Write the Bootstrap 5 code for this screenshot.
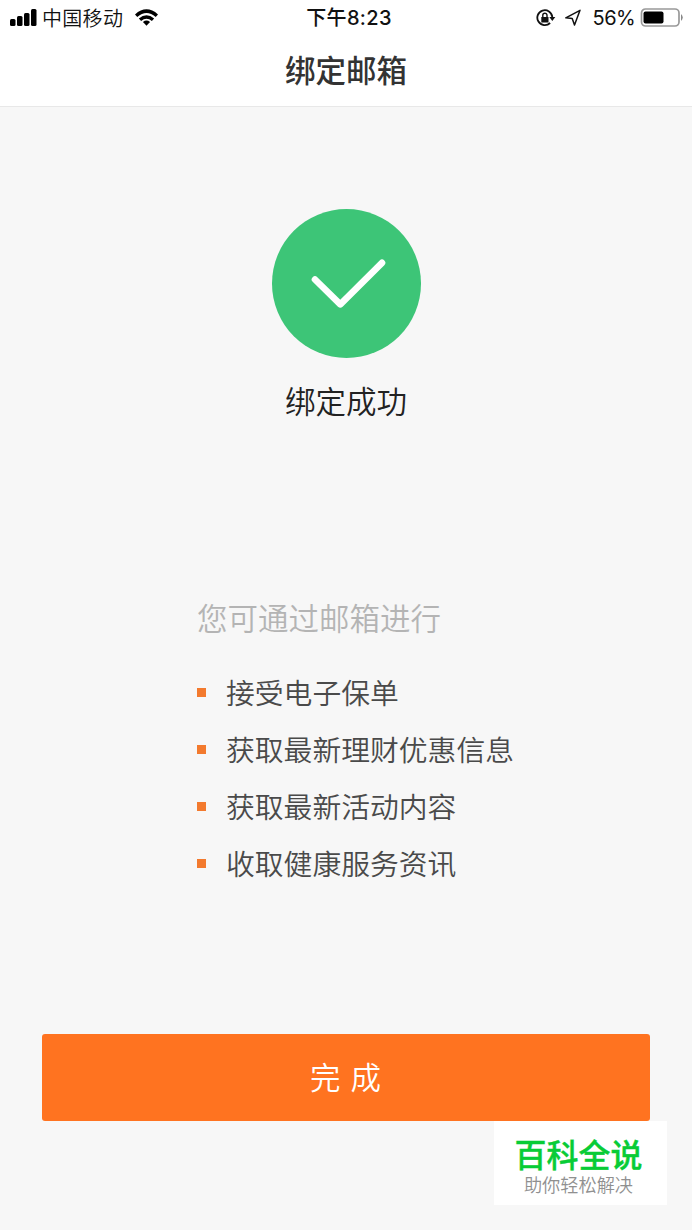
<!DOCTYPE html>
<html lang="zh-CN">
<head>
<meta charset="utf-8">
<meta name="viewport" content="width=device-width, initial-scale=1">
<title>绑定邮箱</title>
<link href="https://cdn.jsdelivr.net/npm/bootstrap@5.3.0/dist/css/bootstrap.min.css" rel="stylesheet">
<style>
  body { font-family: "Noto Sans CJK SC", sans-serif; background: #f7f7f7; height: 1230px; overflow: hidden; }
  .top-area { height: 107px; background: #fff; border-bottom: 1px solid #e8e8e8; }
  .status-bar { height: 35px; padding: 0 8px 0 10px; color: #111; font-size: 20px; line-height: 35px; }
  .status-side { flex: 1 1 0; }
  .carrier { font-size: 20px; margin-left: 5px; letter-spacing: .3px; font-weight: 350; line-height: 35px; }
  .latin { font-family: Inter, "Noto Sans CJK SC", sans-serif; }
  .clock { font-weight: 500; letter-spacing: .35px; padding: 2px 0 0 4px; }
  .battery-level { letter-spacing: -.6px; line-height: 33px; padding: 2px 1px 0 0; margin-left: 11px; }
  .page-title { font-size: 30.5px; line-height: 69px; font-weight: 500; color: #333; }
  .success { padding-top: 102px; }
  .success-text { font-size: 30.5px; line-height: 44px; margin-top: 20px; color: #222; font-weight: 350; }
  .benefits { margin: 173px 0 0 197px; }
  .benefits-title { font-size: 30.5px; line-height: 44px; font-weight: 350; color: #b4b4b4; margin-bottom: 25px; }
  .benefits li { font-size: 28.8px; line-height: 54px; height: 57px; color: #4a4a4a; font-weight: 350; }
  .benefits li span:last-child { padding-bottom: 1px; }
  .bullet { width: 9px; height: 9px; background: #f37a2e; margin-right: 20px; }
  .btn-done { height: 87px; margin: 142px 42px 0; padding: 0 1px 1px 0; border-radius: 3px; --bs-btn-color: #fff; --bs-btn-bg: #ff7320; --bs-btn-border-width: 0; font-size: 30.5px; font-weight: 350; word-spacing: 3px; }
  .brand-mark { width: 173px; height: 84px; margin: 0 25px 0 auto; padding: 12px 4px 0 0; background: #fff; }
  .brand-name { font-size: 32px; line-height: 41px; font-weight: 500; color: #08cc36; -webkit-text-stroke: .35px #08cc36; }
  .brand-note { font-size: 18.2px; line-height: 21px; color: #909090; font-weight: 350; }
</style>
</head>
<body>
<header class="top-area">
  <div class="status-bar d-flex align-items-center">
    <div class="status-side d-flex align-items-center">
      <svg width="27" height="17" viewBox="0 0 27 17"><rect y="10" width="5.5" height="7" rx="1.5"/><rect x="7" y="7" width="5.5" height="10" rx="1.5"/><rect x="14" y="4" width="5.5" height="13" rx="1.5"/><rect x="21" width="5.5" height="17" rx="1.5"/></svg>
      <span class="carrier">中国移动</span>
      <svg class="ms-2 ps-1" width="27" height="17" viewBox="0 0 24 17" fill="none" stroke="#000" stroke-width="3.6"><path d="M1.200 6.600Q12-3 22.800 6.600M5.200 10.800Q12 5 18.800 10.800"/><path d="M12 17 8.300 13.200Q12 10.300 15.700 13.200Z" fill="#000" stroke="none"/></svg>
    </div>
    <div class="latin clock">下午8:23</div>
    <div class="status-side d-flex align-items-center justify-content-end">
      <svg width="20" height="18" viewBox="0 0 20 18" fill="none" stroke="#111" stroke-width="1.8"><path d="M14.100 14A7.500 7.500 0 1 1 16.300 8"/><path d="M13.300 8h6l-3 4z" fill="#111" stroke="none"/><rect x="5.300" y="8" width="7.200" height="5.500" fill="#111" stroke="none"/><path d="M6.800 8V6.300a2.100 2.100 0 0 1 4.200 0V8" stroke-width="1.400"/></svg>
      <svg class="ms-2" width="18" height="17" viewBox="0 0 18 17" fill="none" stroke="#111" stroke-width="1.500" stroke-linejoin="round"><path d="M16 1.300 1.800 8.800l6.400.7 2.300 6.500z"/></svg>
      <span class="latin battery-level">56%</span>
      <svg class="ms-1" width="44" height="20" viewBox="0 0 44 20"><rect x="1.500" y="1" width="37.500" height="17" rx="4" fill="none" stroke="#999" stroke-width="1.700"/><rect x="3.500" y="3.500" width="20" height="12" rx="2"/><path d="M41 6q3.500 3.500 0 7z" fill="#888"/></svg>
    </div>
  </div>
  <h1 class="page-title text-center m-0">绑定邮箱</h1>
</header>
<main class="d-flex flex-column">
  <section class="success text-center">
    <svg class="d-block mx-auto" width="149" height="149" viewBox="0 0 149 149"><circle cx="74.500" cy="74.500" r="74.500" fill="#3dc577"/><path d="M43 70.500 68.300 95.300 110 53.800" fill="none" stroke="#fff" stroke-width="6.600" stroke-linecap="round" stroke-linejoin="round"/></svg>
    <p class="success-text mb-0">绑定成功</p>
  </section>
  <section class="benefits">
    <h2 class="benefits-title">您可通过邮箱进行</h2>
    <ul class="list-unstyled m-0">
      <li class="d-flex align-items-center"><span class="bullet"></span><span>接受电子保单</span></li>
      <li class="d-flex align-items-center"><span class="bullet"></span><span>获取最新理财优惠信息</span></li>
      <li class="d-flex align-items-center"><span class="bullet"></span><span>获取最新活动内容</span></li>
      <li class="d-flex align-items-center"><span class="bullet"></span><span>收取健康服务资讯</span></li>
    </ul>
  </section>
  <button type="button" class="btn btn-done">完 成</button>
  <aside class="brand-mark text-center">
    <div class="brand-name">百科全说</div>
    <div class="brand-note">助你轻松解决</div>
  </aside>
</main>
<script src="https://cdn.jsdelivr.net/npm/bootstrap@5.3.0/dist/js/bootstrap.bundle.min.js"></script>
</body>
</html>
